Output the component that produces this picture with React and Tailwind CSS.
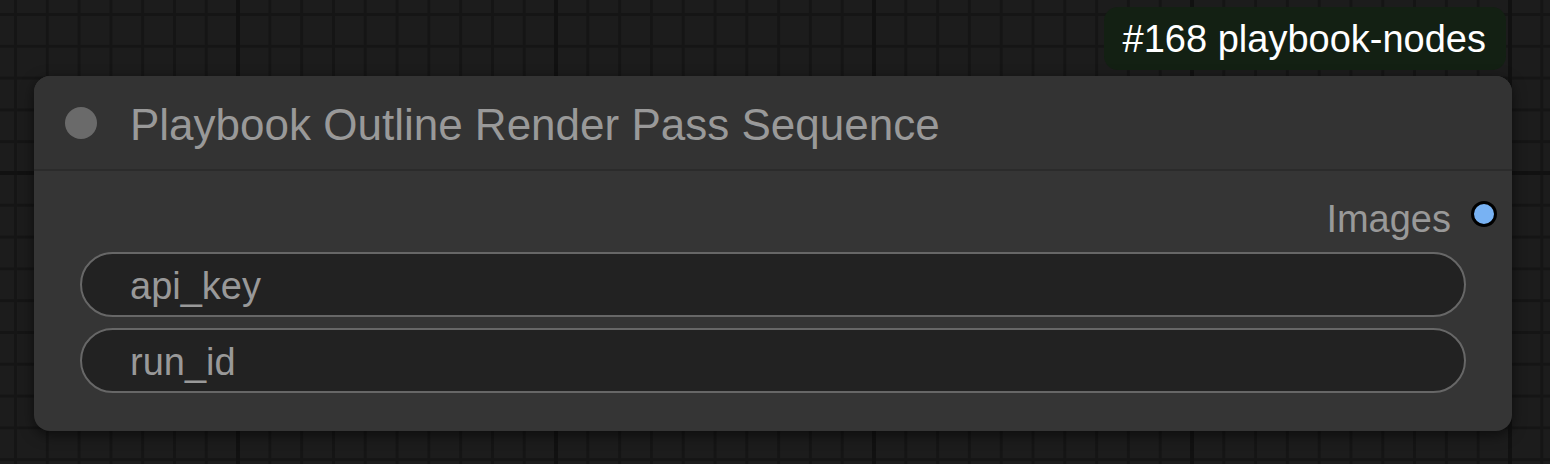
export default function App() {
  return (
    <div
      className="w-[1550px] h-[464px] overflow-hidden bg-[#1c1c1c] bg-[image:linear-gradient(to_right,#111111_4px,transparent_4px),linear-gradient(to_bottom,#111111_4px,transparent_4px),linear-gradient(to_right,#151515_3px,transparent_3px),linear-gradient(to_bottom,#151515_3px,transparent_3px)] bg-[size:318px_318px,318px_318px,31.8px_31.8px,31.8px_31.8px] bg-[position:236px_0px,0px_171px,14px_0px,0px_13px] pl-[34px] pt-[7px]"
      style={{ fontFamily: '"Liberation Sans", Arial, sans-serif' }}
    >
      <div className="w-[1478px] flex flex-col">
        <div className="self-end mr-[6px] h-[63px] rounded-[14px] bg-[#132013] pl-[19px] pr-[20px] flex items-center text-white text-[38px] leading-none">
          #168 playbook-nodes
        </div>
        <div className="mt-[6px] h-[355px] rounded-[16px] bg-[#353535] shadow-[0_4px_14px_rgba(0,0,0,0.55)] flex flex-col overflow-hidden">
          <div className="h-[95px] bg-[#333333] flex items-center pl-[31px] border-b-2 border-[#2b2b2b] shrink-0">
            <div className="w-[32px] h-[32px] rounded-full bg-[#6a6a6a]" />
            <div className="ml-[33px] mt-[4px] text-[44px] text-[#999999] leading-[49px]">
              Playbook Outline Render Pass Sequence
            </div>
          </div>
          <div className="flex flex-col pl-[46px] pr-[46px] pt-[23px]">
            <div className="flex justify-end items-start h-[44px] -mr-[31px]">
              <span className="text-[38px] leading-[44px] mt-[3px] text-[#999999]">Images</span>
              <span className="ml-[20px] mt-[7px] w-[26px] h-[26px] rounded-full bg-[#78b2f3] border-[3px] border-black" />
            </div>
            <div className="mt-[14px] h-[65px] rounded-full bg-[#222222] border-2 border-[#676767] flex items-center pl-[48px] pt-[2px] text-[38px] text-[#999999] leading-[44px]">
              api_key
            </div>
            <div className="mt-[11px] h-[65px] rounded-full bg-[#222222] border-2 border-[#676767] flex items-center pl-[48px] pt-[2px] text-[38px] text-[#999999] leading-[44px]">
              run_id
            </div>
          </div>
        </div>
      </div>
    </div>
  );
}
